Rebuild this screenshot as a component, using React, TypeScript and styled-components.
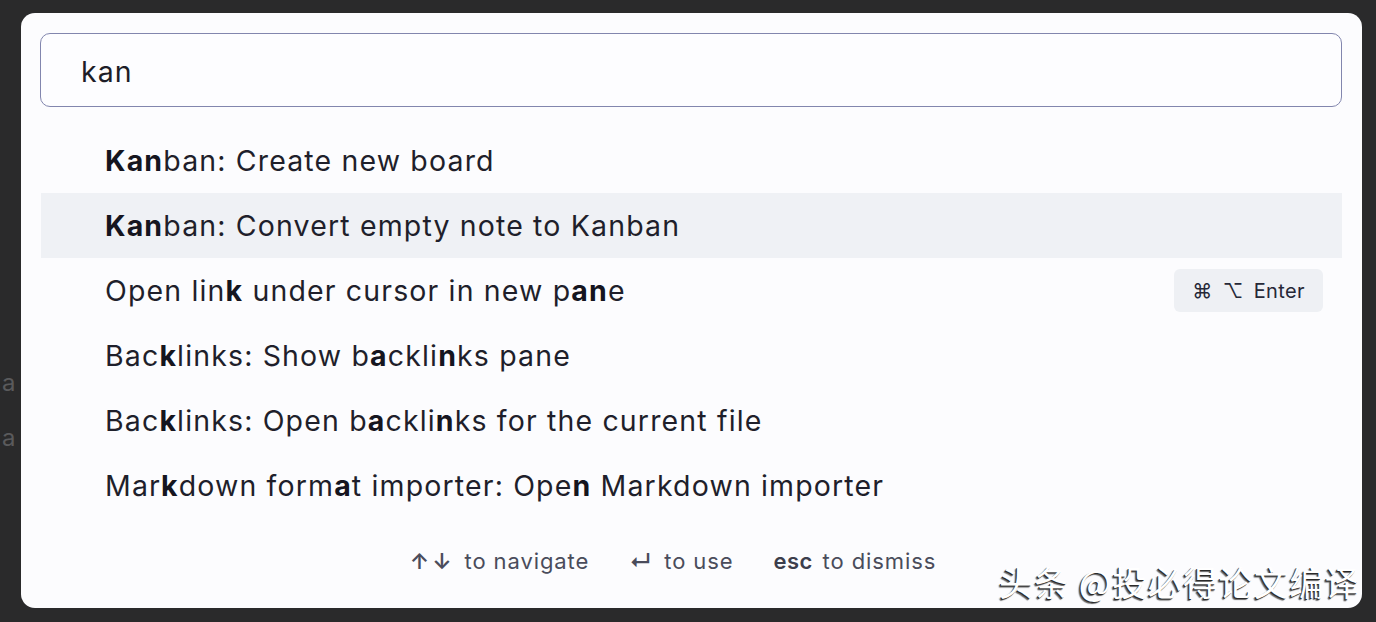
import React from "react";
import styled, { createGlobalStyle } from "styled-components";

const Global = createGlobalStyle`
  html, body { margin: 0; padding: 0; background: #2a2a2a; }
  body { font-family: Inter, "Noto Sans", sans-serif; width: 1376px; height: 622px; overflow: hidden; }
`;

const Page = styled.div`
  position: relative;
  display: flex;
  width: 1376px;
  height: 622px;
  box-sizing: border-box;
  padding: 13px 14px 14px 0;
  background: #2a2a2b;
`;

const Gutter = styled.div`
  width: 21px;
  flex: none;
  display: flex;
  flex-direction: column;
  padding-top: 358px;
  gap: 32px;
  overflow: hidden;
  box-sizing: border-box;
`;

const GutterLetter = styled.span`
  font-family: Inter, sans-serif;
  font-size: 24px;
  line-height: 23px;
  color: #5a5a5c;
  margin-left: 2px;
`;

const Modal = styled.div`
  flex: 1;
  display: flex;
  flex-direction: column;
  background: #fcfcfe;
  border-radius: 14px;
  padding: 20px 20px 0 19px;
  box-sizing: border-box;
`;

const SearchInput = styled.div`
  height: 74px;
  box-sizing: border-box;
  border: 1.5px solid #8286ae;
  border-radius: 10px;
  background: #fdfdff;
  display: flex;
  align-items: center;
  padding: 3px 0 0 40px;
  font-size: 28.5px;
  letter-spacing: 1px;
  color: #1d1d28;
  font-weight: 400;
`;

const List = styled.div`
  margin-top: 21px;
  display: flex;
  flex-direction: column;
  padding-left: 1px;
`;

const Row = styled.div<{ $active?: boolean }>`
  height: 65px;
  display: flex;
  align-items: center;
  justify-content: space-between;
  padding: 0 19px 0 64px;
  background: ${(p) => (p.$active ? "#eff1f5" : "transparent")};
  font-size: 28.5px;
  color: #1f1f2b;
  letter-spacing: 1.15px;
`;

const Title = styled.span`
  white-space: pre;
`;

const Match = styled.b`
  font-weight: 700;
  color: #15151f;
`;

const Hotkey = styled.span`
  display: flex;
  align-items: center;
  gap: 10px;
  height: 43px;
  padding: 0 18px 0 18px;
  background: #eef0f4;
  border-radius: 6px;
  font-size: 20px;
  letter-spacing: 0.4px;
  color: #262837;
`;

const Footer = styled.div`
  display: flex;
  justify-content: center;
  gap: 40px;
  padding: 29px 36px 0 0;
  font-size: 22px;
  letter-spacing: 0.9px;
  line-height: 28px;
  color: #4a4c5b;
`;

const Hint = styled.span`
  display: flex;
  align-items: center;
  gap: 10px;
`;

const Arrows = styled.span`
  font-weight: 600;
  letter-spacing: 3px;
`;

const Key = styled.span`
  font-weight: 600;
  color: #3c3e4c;
  letter-spacing: 0.4px;
`;

const Watermark = styled.div`
  position: absolute;
  left: 999px;
  top: 561px;
  font-family: "Noto Sans CJK SC", sans-serif;
  font-size: 34px;
  line-height: 42px;
  color: #ffffff;
  letter-spacing: 1.4px;
  text-shadow: -1px 1px 0 #2a2a2a, -2px 2px 1px rgba(0, 0, 0, 0.6);
`;

type Part = { t: string; b?: boolean };

const items: { parts: Part[]; active?: boolean; hotkey?: boolean }[] = [
  { parts: [{ t: "Kan", b: true }, { t: "ban: Create new board" }] },
  { parts: [{ t: "Kan", b: true }, { t: "ban: Convert empty note to Kanban" }], active: true },
  {
    parts: [
      { t: "Open lin" },
      { t: "k", b: true },
      { t: " under cursor in new p" },
      { t: "an", b: true },
      { t: "e" },
    ],
    hotkey: true,
  },
  {
    parts: [
      { t: "Bac" },
      { t: "k", b: true },
      { t: "links: Show b" },
      { t: "a", b: true },
      { t: "ckli" },
      { t: "n", b: true },
      { t: "ks pane" },
    ],
  },
  {
    parts: [
      { t: "Bac" },
      { t: "k", b: true },
      { t: "links: Open b" },
      { t: "a", b: true },
      { t: "ckli" },
      { t: "n", b: true },
      { t: "ks for the current file" },
    ],
  },
  {
    parts: [
      { t: "Mar" },
      { t: "k", b: true },
      { t: "down form" },
      { t: "a", b: true },
      { t: "t importer: Ope" },
      { t: "n", b: true },
      { t: " Markdown importer" },
    ],
  },
];

export default function App() {
  return (
    <>
      <Global />
      <Page>
        <Gutter>
          <GutterLetter>a</GutterLetter>
          <GutterLetter>a</GutterLetter>
        </Gutter>
        <Modal>
          <SearchInput>kan</SearchInput>
          <List>
            {items.map((it, i) => (
              <Row key={i} $active={it.active}>
                <Title>
                  {it.parts.map((p, j) =>
                    p.b ? <Match key={j}>{p.t}</Match> : <React.Fragment key={j}>{p.t}</React.Fragment>
                  )}
                </Title>
                {it.hotkey && (
                  <Hotkey>
                    <span>⌘</span>
                    <span>⌥</span>
                    <span>Enter</span>
                  </Hotkey>
                )}
              </Row>
            ))}
          </List>
          <Footer>
            <Hint>
              <Arrows>↑↓</Arrows>
              <span>to navigate</span>
            </Hint>
            <Hint>
              <Arrows>↵</Arrows>
              <span>to use</span>
            </Hint>
            <Hint>
              <Key>esc</Key>
              <span>to dismiss</span>
            </Hint>
          </Footer>
        </Modal>
        <Watermark>头条 @投必得论文编译</Watermark>
      </Page>
    </>
  );
}
